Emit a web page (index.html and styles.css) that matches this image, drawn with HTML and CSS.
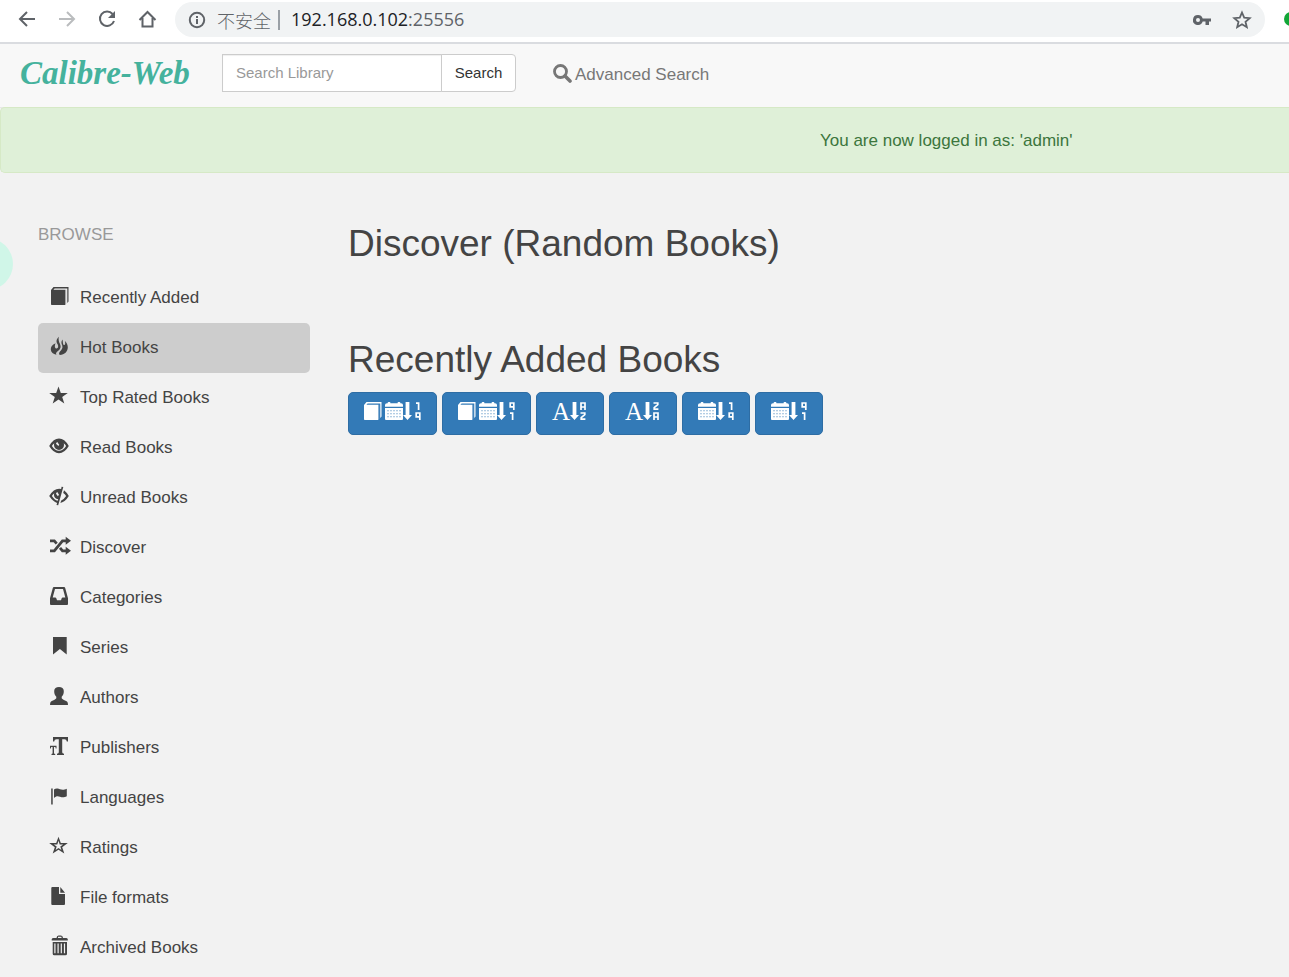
FILE: index.html
```html
<!DOCTYPE html>
<html lang="en">
<head>
<meta charset="utf-8">
<title>Calibre-Web</title>
<link rel="stylesheet" href="styles.css">
</head>
<body>
<svg class="sprite" aria-hidden="true">
  <symbol id="book" viewBox="0 0 18 18"><path d="M2.5 0H17.5V14.5L16.3 16V1.6H3.6L2.4 2.8H14.2V18H.8Q0 18 0 17.2V3Z"/><path d="M14.2 2.8H15.2V17L14.2 18Z" opacity=".35"/></symbol>
  <symbol id="calendar" viewBox="0 0 18 18"><path d="M0 4.8V3Q0 1.2 2 1.2H2.7V.8Q2.7 0 3.6 0H4.6Q5.4 0 5.4.8V1.2H12.6V.8Q12.6 0 13.4 0H14.4Q15.3 0 15.3.8V1.2H16Q18 1.2 18 3V4.8Z"/><path fill-rule="evenodd" d="M0 6H18V17Q18 18 17 18H1Q0 18 0 17ZM2.5 8.2v1h1v-1zm3 0v1h1v-1zm3 0v1h1v-1zm3 0v1h1v-1zm3 0v1h1v-1zM2.5 11.2v1h1v-1zm3 0v1h1v-1zm3 0v1h1v-1zm3 0v1h1v-1zm3 0v1h1v-1zM2.5 14.2v1h1v-1zm3 0v1h1v-1zm3 0v1h1v-1zm3 0v1h1v-1zm3 0v1h1v-1z"/></symbol>
  <symbol id="down" viewBox="0 0 9 18"><path d="M2.6 0H6.4V13H9L4.5 18L0 13H2.6Z"/></symbol>
  <symbol id="one" viewBox="0 0 6 8"><path d="M1 1.2H3.6V8" class="stroke"/></symbol>
  <symbol id="nine" viewBox="0 0 6 8"><path d="M4.8 4.8H1.2V1H4.8V8" class="stroke"/></symbol>
  <symbol id="alpha" viewBox="0 0 6 8"><path d="M1 8V1H5V8M1 5H5" class="stroke"/></symbol>
  <symbol id="zed" viewBox="0 0 6 8"><path d="M.5 1H4.8V2.6L1.2 5.6V7.2H5.4" class="stroke"/></symbol>
  <symbol id="sort-19" viewBox="0 0 18 18"><use href="#down" width="9" height="18"/><use href="#one" x="12" width="6" height="8"/><use href="#nine" x="12" y="10" width="6" height="8"/></symbol>
  <symbol id="sort-91" viewBox="0 0 18 18"><use href="#down" width="9" height="18"/><use href="#nine" x="12" width="6" height="8"/><use href="#one" x="12" y="10" width="6" height="8"/></symbol>
  <symbol id="sort-az" viewBox="0 0 18 18"><use href="#down" width="9" height="18"/><use href="#alpha" x="10" width="6" height="8"/><use href="#zed" x="10" y="10" width="6" height="8"/></symbol>
  <symbol id="sort-za" viewBox="0 0 18 18"><use href="#down" width="9" height="18"/><use href="#zed" x="10" width="6" height="8"/><use href="#alpha" x="10" y="10" width="6" height="8"/></symbol>
</svg>

<header class="browser">
  <button class="tool" aria-label="Back"><svg width="20" height="20" viewBox="0 0 20 20"><path class="line" d="M18 10H3.5M10 3L3 10L10 17"/></svg></button>
  <button class="tool faded" aria-label="Forward"><svg width="20" height="20" viewBox="0 0 20 20"><path class="line" d="M2 10H16.5M10 3L17 10L10 17"/></svg></button>
  <button class="tool" aria-label="Reload"><svg width="20" height="20" viewBox="0 0 20 20"><path class="line" d="M15.6 5A7.2 7.2 0 1 0 17 12"/><path d="M18 2V9H11Z"/></svg></button>
  <button class="tool" aria-label="Home"><svg width="20" height="20" viewBox="0 0 20 20"><path class="line" d="M2.5 11L10.5 3L18.5 11M5.5 9V17.5H15.5V9"/></svg></button>
  <div class="address">
    <svg width="18" height="18" viewBox="0 0 18 18"><circle class="line" cx="9" cy="9" r="7.2"/><path d="M8 8H10V13H8ZM8 5H10V7H8Z"/></svg>
    <span class="insecure">不安全</span>
    <span class="url"><b>192.168.0.102</b>:25556</span>
    <button class="tool end" aria-label="Passwords"><svg width="20" height="20" viewBox="0 0 20 20"><path fill-rule="evenodd" d="M6 5A5 5 0 1 0 10.7 11.6H13.5V15H17V11.6H19V8.4H10.7A5 5 0 0 0 6 5ZM6 8a2 2 0 1 1 0 4a2 2 0 1 1 0-4Z"/></svg></button>
    <button class="tool" aria-label="Bookmark this page"><svg width="20" height="20" viewBox="0 0 20 20"><path class="thin" d="M10 2.5L12.2 7.6L17.7 8.1L13.5 11.8L14.8 17.2L10 14.3L5.2 17.2L6.5 11.8L2.3 8.1L7.8 7.6Z"/></svg></button>
  </div>
  <span class="extension"></span>
</header>

<nav class="navbar">
  <a class="brand" href="#">Calibre-Web</a>
  <form class="search">
    <input type="text" aria-label="Search Library" placeholder="Search Library">
    <button type="button">Search</button>
  </form>
  <a class="advanced" href="#"><svg width="19" height="19" viewBox="0 0 19 19"><circle cx="7.5" cy="7.5" r="6" fill="none" stroke="currentColor" stroke-width="2.8"/><path d="M12 12L17 17" stroke="currentColor" stroke-width="3.6" stroke-linecap="round"/></svg>Advanced Search</a>
</nav>

<div class="alert">You are now logged in as: 'admin'</div>

<div class="page">
  <aside class="sidebar">
    <div class="heading">BROWSE</div>
    <ul>
      <li><a href="#"><svg viewBox="0 0 22 20"><use href="#book" x="2" y="1" width="18" height="18"/></svg>Recently Added</a></li>
      <li><a class="active" href="#"><svg viewBox="0 0 22 20"><path d="M9.8.7C6.6 4 7.4 6.2 8.6 8.3C9.7 10.4 9.2 12.5 7.6 12.5C5.6 12.5 5.4 10 6.6 7.2C3 8.8 1.6 11 1.8 13.6C2 16.4 4.2 18.2 7.4 18.8C6.4 17 7.6 16.1 9 15C11.6 13 12.3 10.6 11 8C10 6 9.2 3.4 9.8.7ZM13.6 3.4C11.8 5.4 12.4 7.4 13.2 9.3C14.2 12 12.5 14 11 15.5C9.8 16.8 9.8 18.1 10.8 19.1C15.6 18.6 18.8 15.8 18.8 11.3C18.8 8.6 17.6 6.6 15.9 5C16.7 7.8 16 9.3 15 9C13.7 8.6 13.9 5.8 13.6 3.4Z"/></svg>Hot Books</a></li>
      <li><a href="#"><svg viewBox="0 0 22 20"><path d="M9.5.5L11.8 7H18.8L13.2 11.1L15.3 17.5L9.5 13.6L3.7 17.5L5.8 11.1L.2 7H7.2Z"/></svg>Top Rated Books</a></li>
      <li><a href="#"><svg viewBox="0 0 22 20"><path fill-rule="evenodd" d="M.2 10Q4.5 2.6 10 2.6Q15.5 2.6 19.8 10Q15.5 17.3 10 17.3Q4.5 17.3.2 10ZM2.9 10Q5.7 14.8 10 14.8Q14.3 14.8 17.1 10Q16.3 8.4 14.7 7.2Q15 8 15 8.9A5 5 0 0 1 5 8.9Q5 8 5.3 7.2Q3.7 8.4 2.9 10ZM7 7.8L9.4 10.1L10.2 8.8L8.3 6Q7.2 6.7 7 7.8Z"/></svg>Read Books</a></li>
      <li><a href="#"><svg viewBox="0 0 22 20"><path fill-rule="evenodd" d="M12.6.7L14.3 1.1L9.2 19.3L7.5 18.9L8.1 16.9Q4 15.6.2 10Q4.5 2.7 10.2 2.7L12.1 3ZM8.7 14.7L9.2 13.3Q5 12.2 5 8.9Q5 8 5.3 7.2Q3.7 8.4 2.9 10Q5.4 14.1 8.7 14.7ZM7 7.8L8.9 10.2L10 8.8L8.3 6Q7.2 6.7 7 7.8Z"/><path d="M15 4.2Q17.7 6.2 19.8 10Q16.5 15.6 11.4 17L12.2 14.4Q15 13.4 17.1 10Q16 8 14.2 6.9Z"/></svg>Unread Books</a></li>
      <li><a href="#"><svg viewBox="0 0 22 20"><path d="M1 4.8H5.3L7.7 7.6M1 14.8H5.3L13.5 4.8H18M11 11.8L13.5 14.8H18" fill="none" stroke="currentColor" stroke-width="2.8"/><path d="M16.7.8L22 4.8L16.7 8.8ZM16.7 10.8L22 14.8L16.7 18.8Z"/></svg>Discover</a></li>
      <li><a href="#"><svg viewBox="0 0 22 20"><path fill-rule="evenodd" d="M5 1H15Q16 1 16.2 2L19 12.2V18Q19 19 18 19H2Q1 19 1 18V12.2L3.8 2Q4 1 5 1ZM6 3L3.7 11.5H6.3Q7 11.5 7.3 12.3L8 14.3H12L12.7 12.3Q13 11.5 13.7 11.5H16.3L14 3Z"/></svg>Categories</a></li>
      <li><a href="#"><svg viewBox="0 0 22 20"><path d="M4 1H17.7V18.6L10.9 13L4 18.6Z"/></svg>Series</a></li>
      <li><a href="#"><svg viewBox="0 0 22 20"><path d="M10 1C12.8 1 14.8 2.5 14.8 5C14.8 7.4 14.3 9.3 12.7 10.8V12.3C13 13.3 16.5 14.6 18 15.5Q19 16.2 19 19H1Q1 16.2 2 15.5C3.5 14.6 7 13.3 7.3 12.3V10.8C5.7 9.3 5.2 7.4 5.2 5C5.2 2.5 7.2 1 10 1Z"/></svg>Authors</a></li>
      <li><a href="#"><svg viewBox="0 0 22 20"><path d="M4 .9H19V5.6H17.8Q17.6 3.2 15.5 3.2H13.2V16.2Q13.2 17.6 15 17.8V19H8V17.8Q9.8 17.6 9.8 16.2V3.2H7.5Q5.4 3.2 5.2 5.6H4Z"/><path d="M1 9.8H7.5V12.4H6.7L6.4 11.1H5V17.6L6.2 18V19H2.5V18L3.6 17.6V11.1H2.2L1.8 12.4H1Z"/></svg>Publishers</a></li>
      <li><a href="#"><svg viewBox="0 0 22 20"><path d="M2.2 2.4H3.7V18.6H2.2ZM5 3.5Q6.5 2.3 8.5 2.5C11 2.8 13 5 17.8 2.7V10.3C15 11.8 13 11.5 11 10.7C9 9.9 7 9.8 5 12Z"/></svg>Languages</a></li>
      <li><a href="#"><svg viewBox="0 0 22 20"><path fill-rule="evenodd" d="M9.5.8L11.8 7.1H18.8L13.2 11.2L15.3 17.6L9.5 13.7L3.7 17.6L5.8 11.2L.2 7.1H7.2ZM9.5 4.8L8.3 8.6H4.8L7.7 10.6L6.6 14L9.5 11.9L12.4 14L11.3 10.6L14.2 8.6H10.7Z"/></svg>Ratings</a></li>
      <li><a href="#"><svg viewBox="0 0 22 20"><path d="M2.3 2Q2.3 1 3.3 1H10V8H16V18Q16 19 15 19H3.3Q2.3 19 2.3 18ZM11.3 1L16 6.8H11.3Z"/></svg>File formats</a></li>
      <li><a href="#"><svg viewBox="0 0 22 20"><path fill-rule="evenodd" d="M2.7 3.2Q3 2 4.5 2H7.5Q7.7-.5 9.5-.5H12Q13.9-.5 14 2H17Q18.5 2 18.8 3.2V4.5H2.7ZM9 2H12.5V.8H9ZM3.7 6H18V17.8Q18 19.3 16.5 19.3H5.2Q3.7 19.3 3.7 17.8ZM5.3 7.4V17.3H6.5V7.4ZM8.5 7.4V17.3H9.7V7.4ZM11.7 7.4V17.3H12.9V7.4ZM14.9 7.4V17.3H16.1V7.4Z"/></svg>Archived Books</a></li>
    </ul>
  </aside>
  <main class="content">
    <section class="discover"><h2>Discover (Random Books)</h2></section>
    <section>
      <h2>Recently Added Books</h2>
      <div class="sorts">
        <button aria-label="Sort by book date, newest first"><svg class="spaced"><use href="#book"/></svg><svg><use href="#calendar"/></svg><svg><use href="#sort-19"/></svg></button>
        <button aria-label="Sort by book date, oldest first"><svg class="spaced"><use href="#book"/></svg><svg><use href="#calendar"/></svg><svg><use href="#sort-91"/></svg></button>
        <button aria-label="Sort title ascending"><span class="letter">A</span><svg><use href="#sort-az"/></svg></button>
        <button aria-label="Sort title descending"><span class="letter">A</span><svg><use href="#sort-za"/></svg></button>
        <button aria-label="Sort by publishing date, ascending"><svg><use href="#calendar"/></svg><svg><use href="#sort-19"/></svg></button>
        <button aria-label="Sort by publishing date, descending"><svg><use href="#calendar"/></svg><svg><use href="#sort-91"/></svg></button>
      </div>
    </section>
  </main>
  <span class="bubble"></span>
</div>
</body>
</html>
```
FILE: styles.css
```css
* { box-sizing: border-box; }
html { overflow: hidden; }
body {
  margin: 0;
  background: #f2f2f2;
  color: #444;
  font: 17px/24px "Liberation Sans", Arial, sans-serif;
}
a { color: inherit; text-decoration: none; }
svg { display: block; flex: none; fill: currentColor; }
.sprite { position: absolute; width: 0; height: 0; }
.stroke { fill: none; stroke: currentColor; stroke-width: 1.7; }

.browser {
  display: flex;
  align-items: center;
  gap: 20px;
  height: 44px;
  padding: 0 0 5px 17px;
  overflow: hidden;
  background: #fff;
  border-bottom: 2px solid #dadce0;
  color: #5f6368;
}
.line { fill: none; stroke: currentColor; stroke-width: 2; }
.thin { fill: none; stroke: currentColor; stroke-width: 1.8; }
.tool {
  flex: none;
  padding: 0;
  border: 0;
  background: none;
  color: inherit;
}
.faded { color: #babcbe; }
.address {
  display: flex;
  flex: 1;
  align-items: center;
  height: 35px;
  margin-top: 2px;
  margin-left: -2px;
  padding: 0 13px;
  border-radius: 18px;
  background: #f1f3f4;
  font: 18px/24px "Open Sans", "Noto Sans", sans-serif;
}
.insecure {
  margin-left: 11px;
  padding-right: 7px;
  border-right: 2px solid #9aa0a6;
  font: 300 18px/20px "Noto Sans CJK SC", sans-serif;
}
.url { margin-left: 11px; padding-bottom: 2px; }
.url b { color: #202124; font-weight: 400; }
.end { margin-left: auto; margin-right: 20px; }
.extension {
  flex: none;
  width: 14px;
  height: 14px;
  margin-left: -1px;
  margin-right: -9px;
  border-radius: 50%;
  background: #12a637;
}

.navbar {
  display: flex;
  align-items: center;
  height: 64px;
  padding: 0 20px 5px;
  background: #f8f8f8;
  border-bottom: 1px solid #e7e7e7;
}
.brand {
  width: 202px;
  color: #45b29d;
  font: italic bold 33px/40px "Liberation Serif", serif;
}
.search { display: flex; height: 38px; }
.search input, .search button {
  border: 1px solid #ccc;
  background: #fff;
  color: #333;
  font: 15px/20px "Liberation Sans", Arial, sans-serif;
}
.search input {
  width: 220px;
  padding: 0 13px;
  box-shadow: inset 0 1px 1px #0001;
}
.search input::placeholder { color: #999; }
.search button {
  width: 75px;
  margin-left: -1px;
  padding: 0;
  border-radius: 0 4px 4px 0;
}
.advanced {
  display: flex;
  align-items: center;
  gap: 3px;
  margin-left: 37px;
  padding-top: 4px;
  color: #777;
}
.advanced svg { margin-bottom: 4px; }
.alert {
  padding: 21px 0 19px 819px;
  margin-top: -1px;
  border: 1px solid #d6e9c6;
  border-right: 0;
  border-radius: 5px 0 0 5px;
  background: #dff0d8;
  color: #3c763d;
  white-space: nowrap;
}
.page { position: relative; display: flex; padding: 50px 38px 0; }
.sidebar { flex: none; width: 272px; }
.heading { color: #999; }
.sidebar ul { margin: 26px 0 0; padding: 0; list-style: none; }
.sidebar a {
  display: flex;
  align-items: center;
  gap: 9px;
  height: 50px;
  padding: 0 11px;
  border-radius: 5px;
}
.sidebar svg { width: 22px; height: 20px; margin-bottom: 4px; overflow: visible; }
.sidebar .active { background: #cdcdcd; }
.content { flex: 1; padding-left: 38px; }
.discover { margin-bottom: 74px; }
h2 { margin: 0; font-size: 37px; font-weight: 400; line-height: 42px; }
.sorts { display: flex; gap: 5px; margin-top: 11px; }
.sorts button {
  display: flex;
  height: 43px;
  padding: 9px 15px;
  border: 1px solid #2e6da4;
  border-radius: 5px;
  background: #337ab7;
  color: #fff;
}
.sorts svg { width: 18px; height: 18px; }
.sorts .spaced { margin-right: 3px; }
.letter { width: 18px; font: 25px/20px "Liberation Serif", serif; }
.bubble {
  position: absolute;
  top: 65px;
  left: -39px;
  width: 52px;
  height: 52px;
  border-radius: 50%;
  background: #d0f6e8;
}
```
